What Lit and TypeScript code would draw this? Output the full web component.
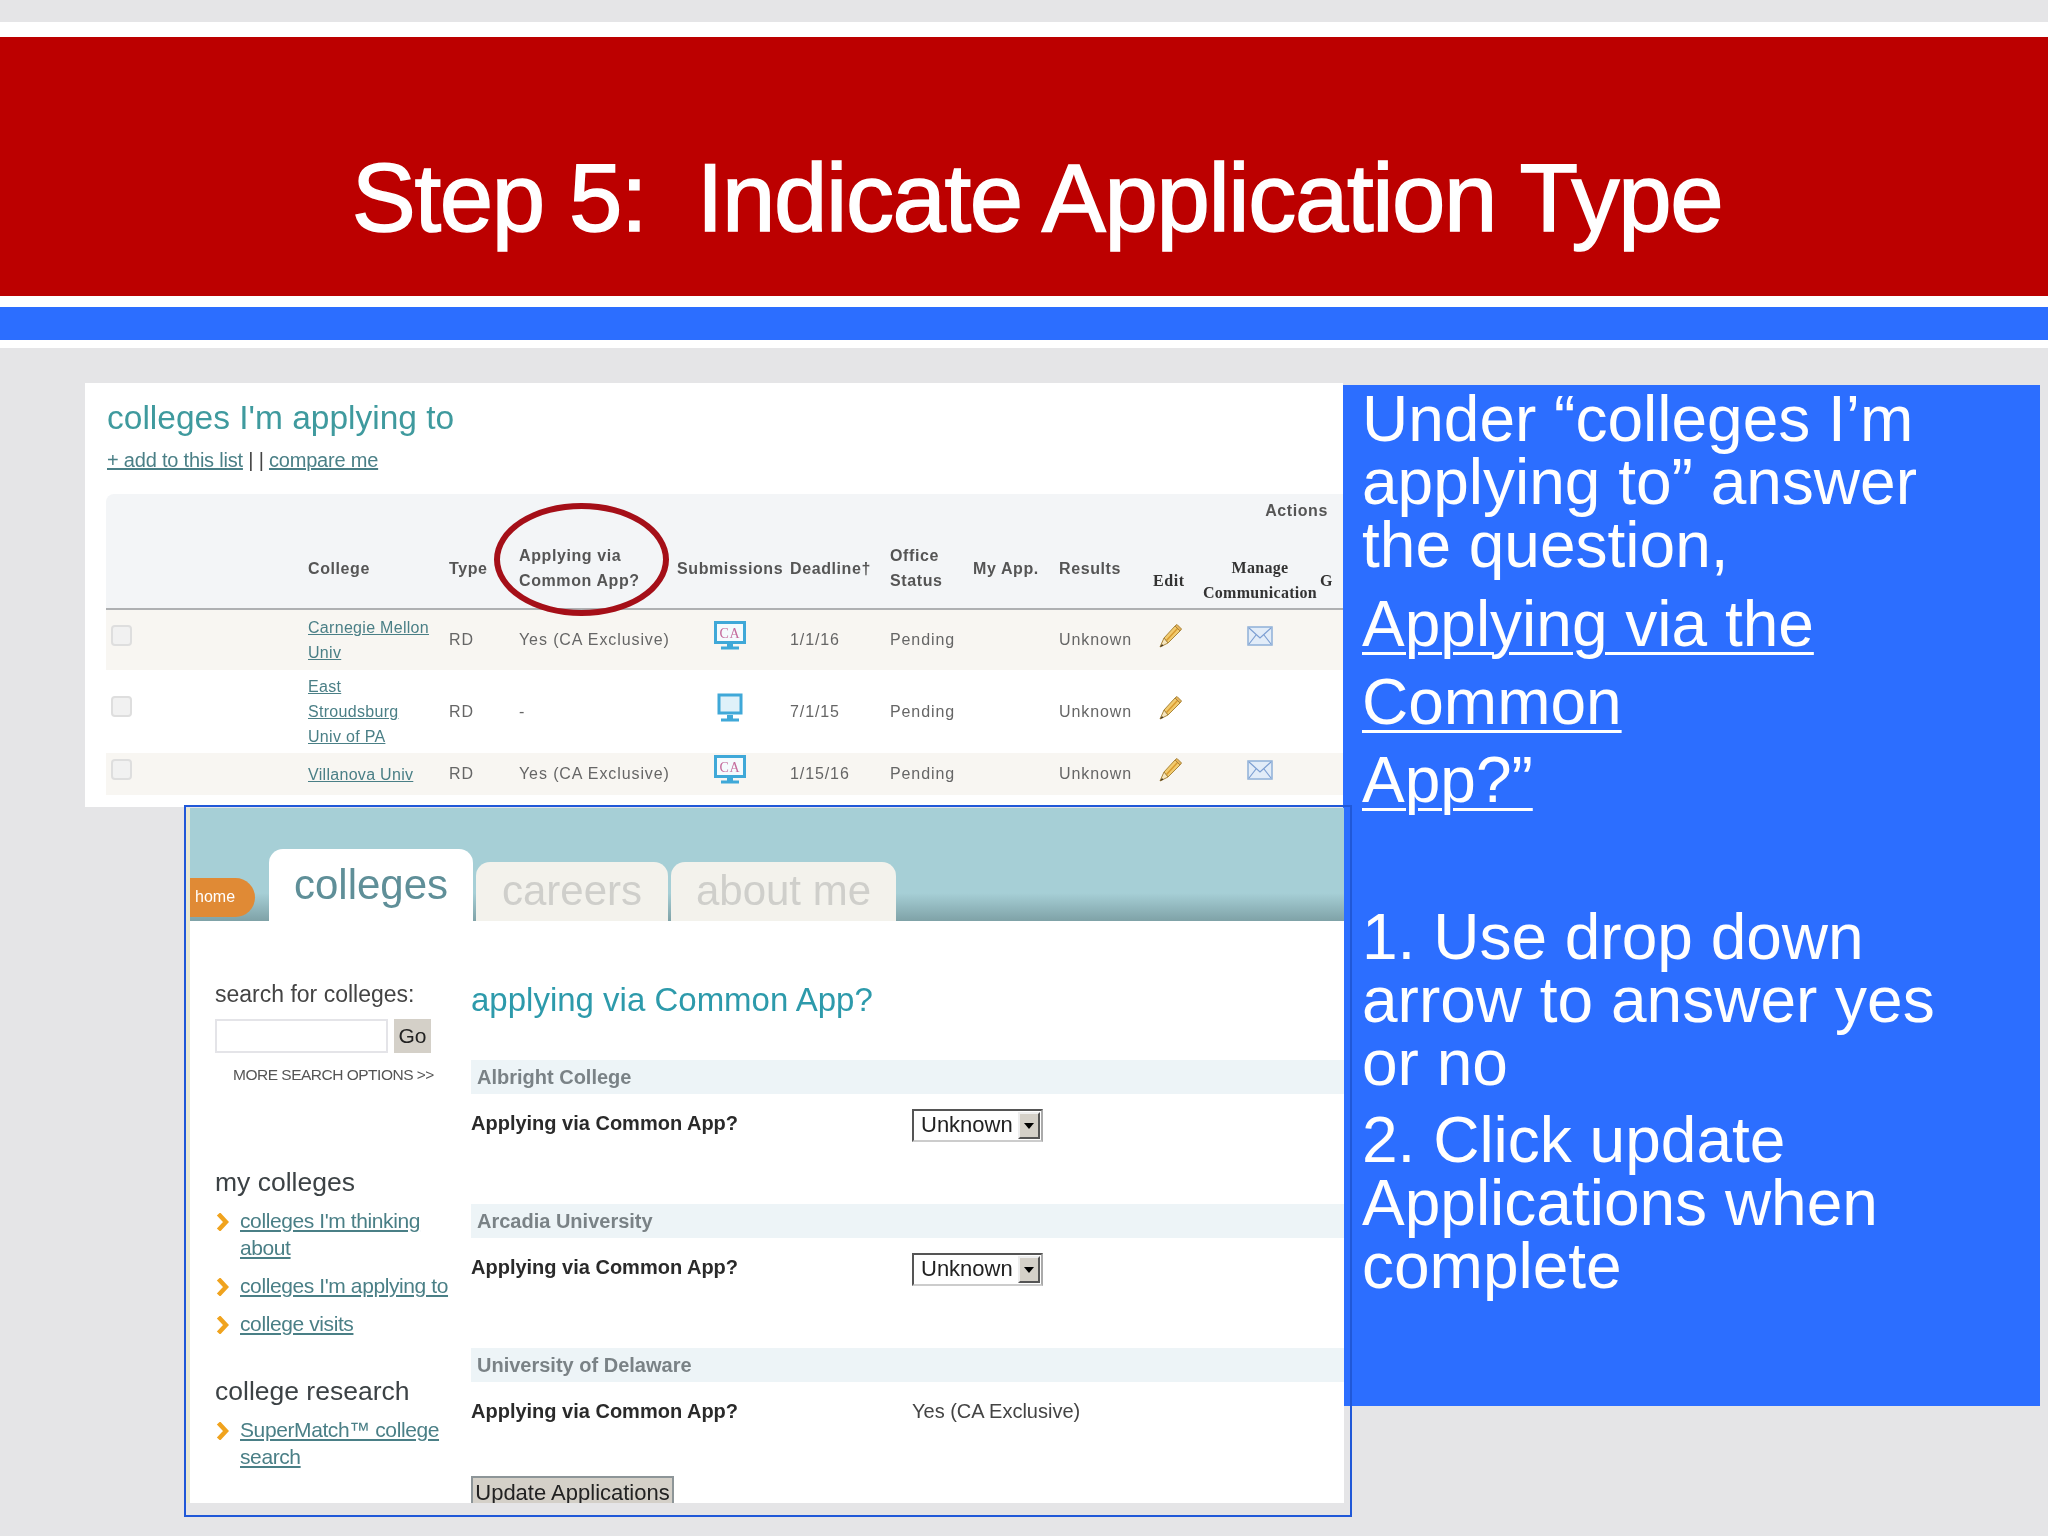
import { LitElement, html, css, svg } from "lit";
import { customElement } from "lit/decorators.js";

const monitor = (ca: boolean) => html`<svg class="mon" width="32" height="30" viewBox="0 0 32 30">
  ${ca
    ? svg`<rect x="1.5" y="1.5" width="29" height="20" fill="#f4fafd" stroke="#3fa8d8" stroke-width="3"/>
      <text x="16" y="16.5" text-anchor="middle" font-family="Liberation Serif, serif" font-size="14" fill="#c46a9c">CA</text>`
    : svg`<rect x="5" y="2" width="22" height="18" fill="#dff1f9" stroke="#3fa8d8" stroke-width="3"/>`}
  <rect x="13" y="22" width="6" height="4" fill="#3fa8d8"/>
  <rect x="7" y="25.5" width="18" height="3" fill="#3fa8d8"/>
</svg>`;

const pencil = html`<svg class="pen" width="26" height="26" viewBox="0 0 26 26">
  <path d="M7 15 L18 3 L23 8 L11 20 Z" fill="#f2cb6e" stroke="#a9853a" stroke-width="1"/>
  <path d="M9.500 17.500 L20.500 5.500" stroke="#d99a2e" stroke-width="1.500"/>
  <path d="M7 15 L11 20 L3 24 Z" fill="#f6e6bf" stroke="#a9853a" stroke-width="1"/>
  <path d="M5 21 L6.500 22.800 L3 24 Z" fill="#4a3a22"/>
  <path d="M18 3 L20 1.500 L24.500 6 L23 8 Z" fill="#e8b45a" stroke="#a9853a" stroke-width="1"/>
</svg>`;

const envelope = html`<svg class="env" width="26" height="20" viewBox="0 0 26 20">
  <rect x="1" y="1" width="24" height="18" fill="#e2ecf8" stroke="#8fb0d8" stroke-width="1.500"/>
  <path d="M2 2 L13 12 L24 2 M2 18 L9 9 M24 18 L17 9" fill="none" stroke="#7d9fd2" stroke-width="1.200"/>
</svg>`;

const chevron = html`<svg class="chev" width="13" height="18" viewBox="0 0 13 18">
  <path d="M2.500 1 L10 9 L2.500 17" fill="none" stroke="#f0a31e" stroke-width="4.500"/>
</svg>`;

interface Row { name: string[]; app: string; ca: boolean; date: string; mail: boolean; cls: string; }
const rows: Row[] = [
  { name: ["Carnegie Mellon", "Univ"], app: "Yes (CA Exclusive)", ca: true, date: "1/1/16", mail: true, cls: "r1" },
  { name: ["East", "Stroudsburg", "Univ of PA"], app: "-", ca: false, date: "7/1/15", mail: false, cls: "r2" },
  { name: ["Villanova Univ"], app: "Yes (CA Exclusive)", ca: true, date: "1/15/16", mail: true, cls: "r3" },
];

@customElement("app-root")
export class AppRoot extends LitElement {
  static styles = css`
    :host { display: block; position: relative; width: 2048px; height: 1536px; overflow: hidden;
      background: #e5e5e7; font-family: "Liberation Sans", Arial, sans-serif; }
    .top-gap { height: 22px; }
    .white-a { height: 15px; background: #fff; }
    .red { height: 259px; box-sizing: border-box; background: #bc0000; padding: 105px 0 0 26px; text-align: center; }
    .red h1 { margin: 0; color: #fff; font-size: 96px; line-height: 112px; font-weight: 400; white-space: pre;
      -webkit-text-stroke: 1.5px #fff; letter-spacing: -1.4px; }
    .white-b { height: 11px; background: #fff; }
    .blue { height: 33px; background: #2c6eff; }
    .white-c { height: 8px; background: #fff; }

    .shot1 { position: absolute; left: 85px; top: 383px; width: 1258px; height: 424px; background: #fff;
      box-sizing: border-box; padding: 15px 0 0 21px; overflow: hidden; }
    .blurred { filter: blur(0.5px); }
    .h-list { color: #3f9a9e; font-size: 33.500px; line-height: 40px; margin-left: 1px; }
    .sub { margin: 10px 0 22px 1px; font-size: 20px; line-height: 24px; color: #444; letter-spacing: -0.2px; }
    .sub a, .coll a { color: #4a7f86; text-decoration: underline; }
    .thead { background: #f3f5f7; border-radius: 8px 0 0 0; border-bottom: 2px solid #aeb0b2; height: 114px; box-sizing: content-box; }
    .actions { height: 34px; line-height: 34px; text-align: right; padding-right: 15px; font-size: 16px; font-weight: 700;
      color: #555; letter-spacing: 0.6px; }
    .grid { display: grid; grid-template-columns: 202px 141px 70px 158px 113px 100px 83px 86px 94px 47px 120px 23px; align-items: center; }
    .hrow { height: 80px; font-size: 16px; font-weight: 700; line-height: 25px; color: #555; letter-spacing: 0.6px; }
    .ser { font-family: "Liberation Serif", serif; color: #333; padding-top: 24px; }
    .ser.mid { text-align: center; letter-spacing: 0.3px; }
    .row { font-size: 16px; color: #666; letter-spacing: 0.9px; }
    .r1 { height: 60px; background: #f8f6f2; }
    .r2 { height: 83px; background: #fff; }
    .r3 { height: 42px; background: #f8f6f2; }
    .coll { line-height: 25px; font-size: 16px; letter-spacing: 0.3px; }
    .coll a { display: block; }
    .check { width: 21px; height: 21px; margin: 0 0 10px 5px; box-sizing: border-box; border: 2px solid #dedede; border-radius: 4px; background: #f1f1f1; }
    .mon { display: block; margin: 0 0 8px 37px; }
    .pen { display: block; margin: 0 0 8px 4px; }
    .env { display: block; margin: 0 auto 8px; }

    .ring { position: absolute; left: 409px; top: 120px; width: 175px; height: 113px; box-sizing: border-box;
      border: 6px solid #a50f18; border-radius: 50%; }

    .panel { position: absolute; left: 1343px; top: 385px; width: 697px; height: 1021px; box-sizing: border-box;
      background: #2c6eff; color: #fff; font-size: 64px; line-height: 63px; padding: 3px 0 0 19px; }
    .panel p { margin: 0; white-space: nowrap; }
    .panel .lnk { margin-top: 8px; line-height: 78px; text-decoration: underline; text-decoration-thickness: 3px; text-underline-offset: 6px; }
    .panel .s1 { margin-top: 87px; }
    .panel .s2 { margin-top: 14px; }

    .shot2 { position: absolute; left: 184px; top: 805px; width: 1168px; height: 712px; box-sizing: border-box;
      border: 2px solid #2058d8; padding: 1px 6px 12px 0; }
    .inner { height: 100%; box-sizing: border-box; border-left: 4px solid #e9e9d2; background: #fff; overflow: hidden; position: relative; }
    .tabs { height: 113px; box-sizing: border-box; display: flex; align-items: flex-end; padding-left: 79px;
      background: linear-gradient(#a6cfd6 0, #a6cfd6 85px, #7fa2a7 113px); }
    .tab { box-sizing: border-box; height: 59px; border-radius: 14px 14px 0 0; background: #f3f2ec; color: #cfcfcb; text-align: center;
      font-size: 42px; line-height: 58px; margin-right: 3px; }
    .tab.on { width: 204px; height: 72px; background: #fff; color: #5f8f98; line-height: 72px; }
    .tab.c { width: 192px; }
    .tab.a { width: 225px; }
    .home { position: absolute; left: -3px; top: 70px; width: 68px; height: 39px; box-sizing: border-box; padding-left: 8px;
      background: #e08a35; border-radius: 0 20px 20px 0; color: #fff; font-size: 16px; line-height: 38px; }
    .tick { position: absolute; left: -3px; top: 109px; width: 3px; height: 18px; background: #6c6c78; }
    .body { display: grid; grid-template-columns: 281px 1fr; }
    .side { padding: 59px 0 0 25px; color: #444; }
    .side .lbl { font-size: 23px; line-height: 28px; }
    .form { display: flex; gap: 6px; margin-top: 11px; }
    .inp { width: 173px; height: 34px; box-sizing: border-box; border: 2px solid #e4e4e8; background: #fff; }
    .go { width: 37px; height: 34px; background: #d4d0c8; color: #222; font-size: 21px; line-height: 34px; text-align: center; }
    .more { margin: 12px 0 0 18px; font-size: 15.500px; line-height: 20px; color: #555; white-space: nowrap; letter-spacing: -0.5px; }
    .sec { font-size: 26.500px; line-height: 32px; color: #3c4245; }
    .sec.mine { margin-top: 81px; }
    .sec.res { margin-top: 38px; }
    .navs { margin-top: 9px; display: flex; flex-direction: column; gap: 11px; }
    .nav { display: grid; grid-template-columns: 25px 1fr; font-size: 21px; line-height: 27px; letter-spacing: -0.4px; }
    .nav a { color: #4a7f86; text-decoration: underline; }
    .chev { margin: 6px 0 0 1px; }
    .main { padding-top: 59px; padding-right: 0; }
    .main h2 { margin: 0 0 40px; font-weight: 400; font-size: 33px; line-height: 40px; color: #2d9aab; }
    .group { height: 144px; }
    .group.last { height: 76px; }
    .bar { height: 34px; line-height: 34px; padding-left: 6px; background: #edf4f7; color: #7a8286; font-size: 20px; font-weight: 700; }
    .q { display: grid; grid-template-columns: 441px 1fr; padding-top: 16px; align-items: start; font-size: 20px; line-height: 26px; }
    .q b { color: #2a2a2a; }
    .sel { display: flex; width: 131px; height: 33px; margin-top: -1px; box-sizing: border-box; border: 2px solid; border-color: #555 #aaa #ccc #555;
      background: #fff; color: #222; font-size: 22px; line-height: 28px; padding-left: 7px; justify-content: space-between; }
    .btn { width: 22px; margin: 1px 1px 1px 0; box-sizing: border-box; background: #d4d0c8; border: 2px solid; border-color: #eee #555 #555 #eee;
      display: flex; align-items: center; justify-content: center; }
    .arrow { width: 0; height: 0; border: 5px solid transparent; border-top: 6px solid #000; border-bottom: 0; }
    .val { font-size: 20px; color: #444; }
    .update { margin-top: 52px; width: 203px; height: 32px; box-sizing: border-box; border: 2px solid #8d9598; background: #d4d0c8;
      color: #222; font-size: 22px; line-height: 30px; text-align: center; white-space: nowrap; }
  `;

  private renderQ(value?: string) {
    return html`<div class="q"><b>Applying via Common App?</b>${value
      ? html`<span class="val">${value}</span>`
      : html`<div class="sel"><span>Unknown</span><span class="btn"><span class="arrow"></span></span></div>`}</div>`;
  }

  render() {
    return html`
      <div class="top-gap"></div>
      <div class="white-a"></div>
      <div class="red"><h1>Step 5:  Indicate Application Type</h1></div>
      <div class="white-b"></div>
      <div class="blue"></div>
      <div class="white-c"></div>

      <section class="shot1 blurred">
        <div class="h-list">colleges I'm applying to</div>
        <div class="sub"><a>+ add to this list</a> | | <a>compare me</a></div>
        <div class="thead">
          <div class="actions">Actions</div>
          <div class="grid hrow">
            <span></span><span>College</span><span>Type</span><span>Applying via<br />Common App?</span>
            <span>Submissions</span><span>Deadline†</span><span>Office<br />Status</span><span>My App.</span><span>Results</span>
            <span class="ser">Edit</span><span class="ser mid">Manage<br />Communication</span><span class="ser">G</span>
          </div>
        </div>
        ${rows.map((r) => html`
          <div class="grid row ${r.cls}">
            <div class="check"></div>
            <div class="coll">${r.name.map((n) => html`<a>${n}</a>`)}</div>
            <span>RD</span>
            <span>${r.app}</span>
            ${monitor(r.ca)}
            <span>${r.date}</span>
            <span>Pending</span>
            <span></span>
            <span>Unknown</span>
            ${pencil}
            ${r.mail ? envelope : html`<span></span>`}
            <span></span>
          </div>`)}
        <div class="ring"></div>
      </section>

      <aside class="panel">
        <p>Under “colleges I’m<br />applying to” answer<br />the question,</p>
        <p class="lnk">Applying via the<br />Common<br />App?”</p>
        <p class="s1">1.  Use drop down<br />arrow to answer yes<br />or no</p>
        <p class="s2">2.  Click update<br />Applications when<br />complete</p>
      </aside>

      <section class="shot2">
        <div class="inner blurred">
          <div class="tabs">
            <div class="tab on">colleges</div>
            <div class="tab c">careers</div>
            <div class="tab a">about me</div>
          </div>
          <div class="home">home</div>
          <div class="tick"></div>
          <div class="body">
            <div class="side">
              <div class="lbl">search for colleges:</div>
              <div class="form"><div class="inp"></div><div class="go">Go</div></div>
              <div class="more">MORE SEARCH OPTIONS &gt;&gt;</div>
              <div class="sec mine">my colleges</div>
              <div class="navs">
                <div class="nav">${chevron}<a>colleges I'm thinking about</a></div>
                <div class="nav">${chevron}<a>colleges I'm applying to</a></div>
                <div class="nav">${chevron}<a>college visits</a></div>
              </div>
              <div class="sec res">college research</div>
              <div class="navs">
                <div class="nav">${chevron}<a>SuperMatch™ college search</a></div>
              </div>
            </div>
            <div class="main">
              <h2>applying via Common App?</h2>
              <div class="group"><div class="bar">Albright College</div>${this.renderQ()}</div>
              <div class="group"><div class="bar">Arcadia University</div>${this.renderQ()}</div>
              <div class="group last"><div class="bar">University of Delaware</div>${this.renderQ("Yes (CA Exclusive)")}</div>
              <div class="update">Update Applications</div>
            </div>
          </div>
        </div>
      </section>
    `;
  }
}
